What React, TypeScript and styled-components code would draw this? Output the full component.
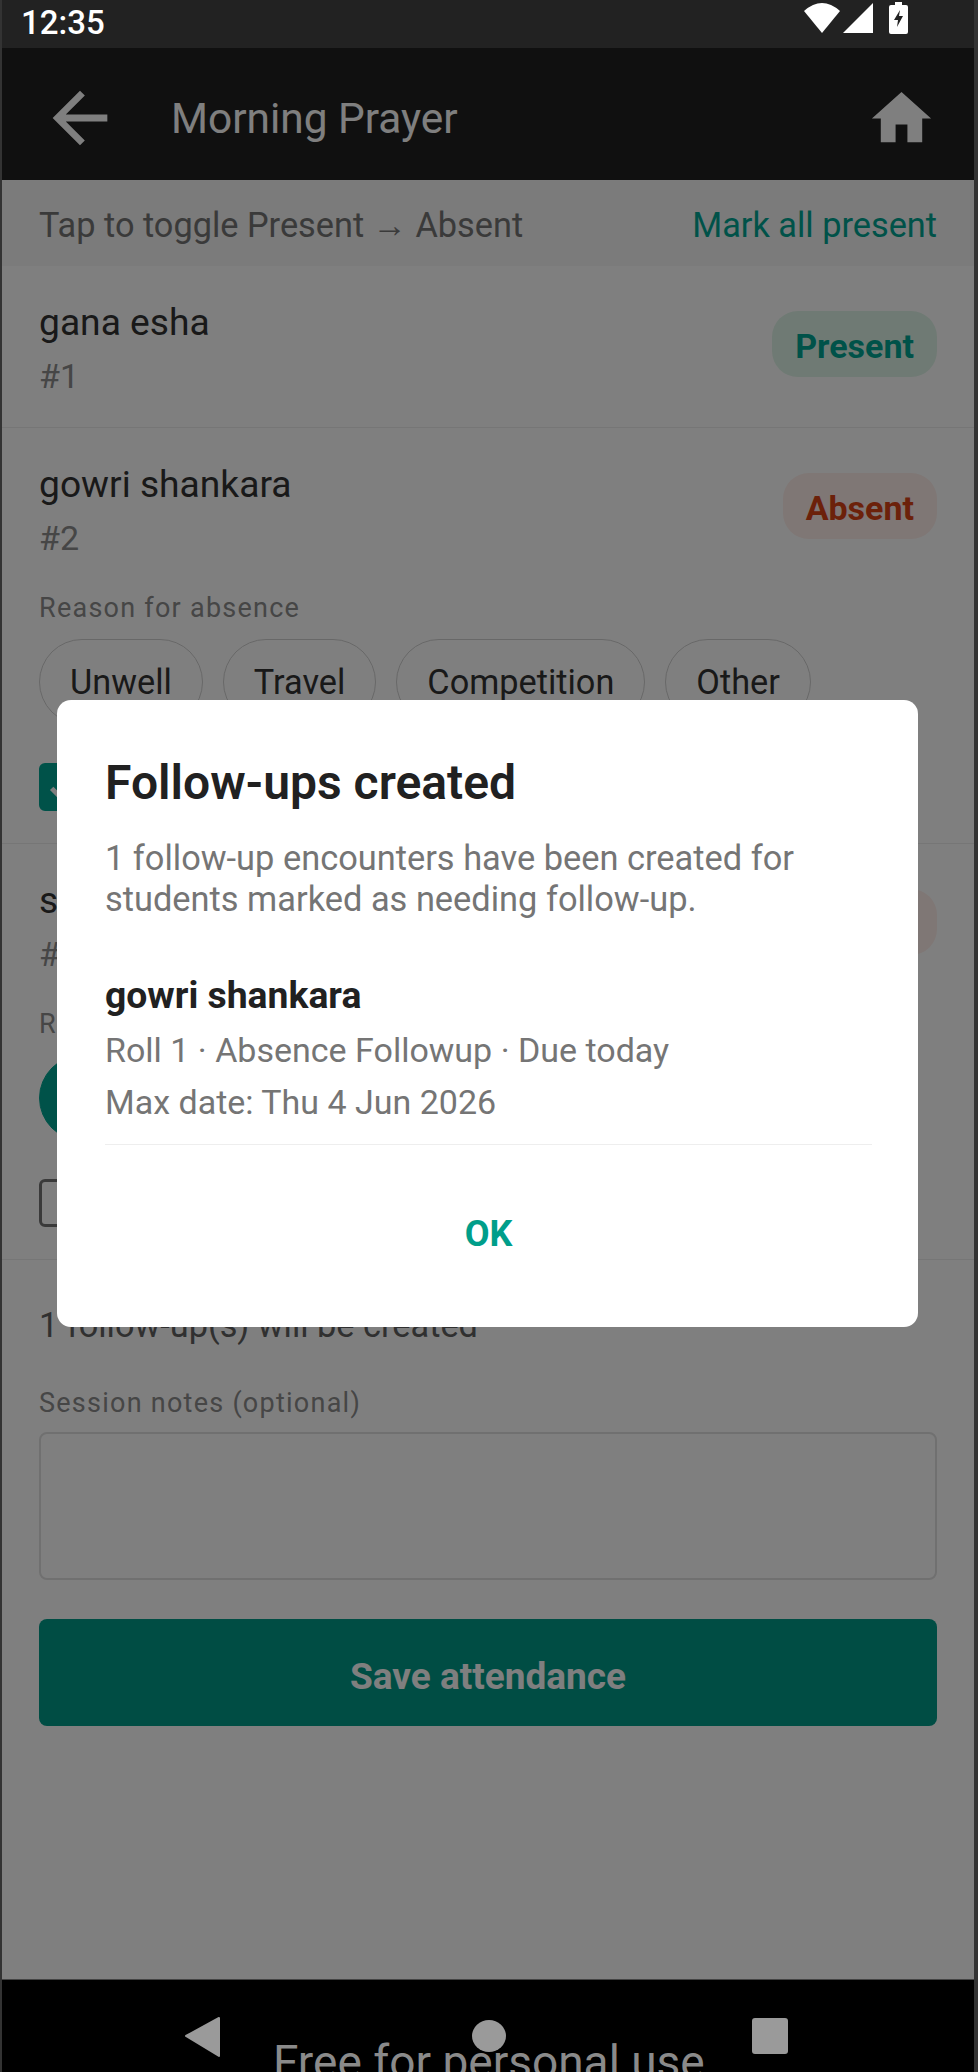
import React from 'react';
import styled, { createGlobalStyle } from 'styled-components';

const GlobalStyle = createGlobalStyle`
  html, body {
    margin: 0;
    padding: 0;
    background: #333;
  }
  * {
    box-sizing: border-box;
  }
`;

const Frame = styled.div`
  width: 978px;
  height: 2072px;
  padding: 0 4px 0 2px;
  display: flex;
  flex-direction: column;
  background: #333;
  font-family: Roboto, 'Liberation Sans', sans-serif;
  overflow: hidden;
`;

const StatusBar = styled.div`
  height: 48px;
  flex: none;
  display: flex;
  align-items: center;
  justify-content: space-between;
  padding: 0 66px 0 19px;
  background: #222;
`;

const Clock = styled.span`
  color: #fff;
  font-size: 33px;
  font-weight: 500;
  line-height: 44px;
  margin-top: -2px;
`;

const StatusIcons = styled.div`
  display: flex;
  align-items: center;
  gap: 3px;
  margin-top: -12px;
`;

const Screen = styled.div`
  position: relative;
  flex: 1;
  display: flex;
  flex-direction: column;
  background: #fff;
`;

const AppBar = styled.header`
  height: 132px;
  flex: none;
  display: flex;
  align-items: center;
  padding: 8px 37px 0;
  background: #202020;
  color: #fff;
`;

const Title = styled.h1`
  flex: 1;
  margin: 2px 0 0 50px;
  font-size: 42.4px;
  font-weight: 400;
  line-height: 52px;
`;

const SubHeader = styled.div`
  height: 86px;
  flex: none;
  display: flex;
  align-items: center;
  justify-content: space-between;
  padding: 3px 37px 0;
  background: #f6f6f6;
  font-size: 34.3px;
  color: #757575;
`;

const MarkAll = styled.span`
  color: #00a592;
`;

const StudentRow = styled.section`
  padding: 34px 37px 28px;
  border-bottom: 1px solid #ededed;
`;

const RowTop = styled.div`
  display: flex;
  justify-content: space-between;
  align-items: flex-start;
  padding-bottom: 1px;
`;

const Name = styled.div`
  font-size: 37.2px;
  line-height: 44px;
  color: #333;
`;

const Roll = styled.div`
  margin-top: 10px;
  font-size: 34px;
  line-height: 44px;
  color: #8c8c8c;
`;

const StatusPill = styled.span<{ $absent?: boolean }>`
  height: 66px;
  margin-top: 11px;
  padding: 4px 23px 0;
  display: flex;
  align-items: center;
  border-radius: 26px;
  font-size: 34px;
  font-weight: 700;
  background: ${({ $absent }) => ($absent ? '#ffeeea' : '#dff5e8')};
  color: ${({ $absent }) => ($absent ? '#d84315' : '#00a592')};
`;

const FieldLabel = styled.div`
  font-size: 27px;
  line-height: 36px;
  letter-spacing: 1.25px;
  color: #8c8c8c;
`;

const AbsenceDetail = styled.div`
  padding-bottom: 4px;
  margin-top: 29px;
`;

const Chips = styled.div`
  display: flex;
  gap: 20px;
  margin-top: 13px;
`;

const Chip = styled.span<{ $active?: boolean }>`
  height: 86px;
  padding: 0 30px;
  display: flex;
  align-items: center;
  border-radius: 43px;
  border: 1.5px solid ${({ $active }) => ($active ? '#00a592' : '#d0d0d0')};
  background: ${({ $active }) => ($active ? '#00a592' : 'transparent')};
  font-size: 34.3px;
  color: ${({ $active }) => ($active ? '#fff' : '#333')};
`;

const FollowUpRow = styled.div`
  display: flex;
  align-items: center;
  gap: 20px;
  margin-top: 38px;
  font-size: 34px;
  color: #333;
`;

const CheckBox = styled.span<{ $checked?: boolean }>`
  width: 48px;
  height: 48px;
  display: flex;
  align-items: center;
  justify-content: center;
  border-radius: 6px;
  border: 3px solid ${({ $checked }) => ($checked ? '#00a592' : '#757575')};
  background: ${({ $checked }) => ($checked ? '#00a592' : 'transparent')};
`;

const Footer = styled.div`
  padding: 43px 37px 0;
`;

const FollowUpCount = styled.div`
  font-size: 34.3px;
  line-height: 44px;
  color: #616161;
`;

const NotesLabel = styled(FieldLabel)`
  margin-top: 38px;
`;

const NotesBox = styled.div`
  height: 148px;
  margin-top: 11px;
  border: 2px solid #e0e0e0;
  border-radius: 8px;
`;

const SaveButton = styled.button`
  width: 100%;
  height: 107px;
  margin-top: 39px;
  padding: 8px 0 0;
  display: block;
  border: 0;
  border-radius: 8px;
  background: #009a88;
  color: #fff;
  font-family: inherit;
  font-size: 37px;
  font-weight: 700;
`;

const Scrim = styled.div`
  position: absolute;
  inset: 0;
  background: rgba(0, 0, 0, 0.5);
`;

const Dialog = styled.div`
  position: absolute;
  left: 55px;
  top: 652px;
  width: 861px;
  height: 627px;
  padding: 55px 46px 0 48px;
  border-radius: 14px;
  background: #fff;
`;

const DialogTitle = styled.h2`
  margin: 0;
  font-size: 48px;
  font-weight: 600;
  line-height: 56px;
  color: #212121;
`;

const DialogText = styled.p`
  margin: 27px 0 0;
  font-size: 34.4px;
  line-height: 41px;
  color: #757575;
`;

const FollowUpName = styled.div`
  margin-top: 53px;
  font-size: 37.3px;
  font-weight: 700;
  line-height: 44px;
  color: #212121;
`;

const FollowUpMeta = styled.div<{ $gap: number }>`
  margin-top: ${({ $gap }) => $gap}px;
  font-size: 34px;
  line-height: 44px;
  color: #757575;
`;

const DialogRule = styled.hr`
  margin: 20px 0 0;
  border: 0;
  border-top: 1.5px solid #eee;
`;

const OkButton = styled.button`
  display: block;
  margin: 67px auto 0;
  padding: 0;
  border: 0;
  background: none;
  font-family: inherit;
  font-size: 36px;
  font-weight: 700;
  line-height: 44px;
  color: #009e8a;
`;

const NavBar = styled.nav`
  position: relative;
  height: 93px;
  flex: none;
  display: flex;
  background: #000;
  border-top: 1px solid #444;
  overflow: hidden;
`;

const NavIcons = styled.svg`
  position: absolute;
  left: 0;
  top: 0;
`;

const Watermark = styled.span`
  position: absolute;
  left: 271px;
  top: 55px;
  font-size: 46px;
  line-height: 54px;
  white-space: nowrap;
  color: #8a8a8a;
`;

const ICON_GREY = '#fff';

function WifiIcon() {
  return (
    <svg width="36" height="30" viewBox="0 0 36 30">
      <path d="M18 30 L0 8 Q18 -8 36 8 Z" fill="#fff" />
    </svg>
  );
}

function SignalIcon() {
  return (
    <svg width="30" height="30" viewBox="0 0 30 30">
      <path d="M30 0 V30 H0 Z" fill="#fff" />
    </svg>
  );
}

function BatteryIcon() {
  return (
    <svg width="19" height="32" viewBox="0 0 19 32" style={{ marginLeft: 13 }}>
      <path d="M6 0 H13 V3 H17 Q19 3 19 5 V30 Q19 32 17 32 H2 Q0 32 0 30 V5 Q0 3 2 3 H6 Z" fill="#fff" />
      <path d="M11 8 L5 18 H9 L8 25 L14 14 H10 Z" fill="#222" />
    </svg>
  );
}

function BackIcon() {
  return (
    <svg width="82" height="82" viewBox="0 0 24 24">
      <path d="M20 11H7.83l5.59-5.59L12 4l-8 8 8 8 1.41-1.41L7.83 13H20v-2z" fill={ICON_GREY} />
    </svg>
  );
}

function HomeIcon() {
  return (
    <svg width="71" height="71" viewBox="0 0 24 24">
      <path d="M10 20v-6h4v6h5v-8h3L12 3 2 12h3v8z" fill={ICON_GREY} />
    </svg>
  );
}

function CheckMark() {
  return (
    <svg width="34" height="34" viewBox="0 0 24 24">
      <path d="M4 13l5 5L20 6" fill="none" stroke="#fff" strokeWidth="3.4" />
    </svg>
  );
}

const REASONS = ['Unwell', 'Travel', 'Competition', 'Other'];

function AbsentDetail({ activeReason, followUp }: { activeReason?: string; followUp?: boolean }) {
  return (
    <AbsenceDetail>
      <FieldLabel>Reason for absence</FieldLabel>
      <Chips>
        {REASONS.map((reason) => (
          <Chip key={reason} $active={reason === activeReason}>
            {reason}
          </Chip>
        ))}
      </Chips>
      <FollowUpRow>
        <CheckBox $checked={followUp}>{followUp && <CheckMark />}</CheckBox>
        Needs follow-up
      </FollowUpRow>
    </AbsenceDetail>
  );
}

export default function App() {
  return (
    <>
      <GlobalStyle />
      <Frame>
        <StatusBar>
          <Clock>12:35</Clock>
          <StatusIcons>
            <WifiIcon />
            <SignalIcon />
            <BatteryIcon />
          </StatusIcons>
        </StatusBar>
        <Screen>
          <AppBar>
            <BackIcon />
            <Title>Morning Prayer</Title>
            <HomeIcon />
          </AppBar>
          <SubHeader>
            <span>Tap to toggle Present → Absent</span>
            <MarkAll>Mark all present</MarkAll>
          </SubHeader>
          <StudentRow>
            <RowTop>
              <div>
                <Name>gana esha</Name>
                <Roll>#1</Roll>
              </div>
              <StatusPill>Present</StatusPill>
            </RowTop>
          </StudentRow>
          <StudentRow>
            <RowTop>
              <div>
                <Name>gowri shankara</Name>
                <Roll>#2</Roll>
              </div>
              <StatusPill $absent>Absent</StatusPill>
            </RowTop>
            <AbsentDetail followUp />
          </StudentRow>
          <StudentRow>
            <RowTop>
              <div>
                <Name>s</Name>
                <Roll>#3</Roll>
              </div>
              <StatusPill $absent>Absent</StatusPill>
            </RowTop>
            <AbsentDetail activeReason="Unwell" />
          </StudentRow>
          <Footer>
            <FollowUpCount>1 follow-up(s) will be created</FollowUpCount>
            <NotesLabel>Session notes (optional)</NotesLabel>
            <NotesBox />
            <SaveButton>Save attendance</SaveButton>
          </Footer>
          <Scrim />
          <Dialog>
            <DialogTitle>Follow-ups created</DialogTitle>
            <DialogText>
              1 follow-up encounters have been created for students marked as needing follow-up.
            </DialogText>
            <FollowUpName>gowri shankara</FollowUpName>
            <FollowUpMeta $gap={11}>Roll 1 · Absence Followup · Due today</FollowUpMeta>
            <FollowUpMeta $gap={8}>Max date: Thu 4 Jun 2026</FollowUpMeta>
            <DialogRule />
            <OkButton>OK</OkButton>
          </Dialog>
        </Screen>
        <NavBar>
          <NavIcons width="972" height="93" viewBox="0 0 972 93">
            <path d="M217 38 V76 L184 56 Z" fill="#9a9a9a" stroke="#9a9a9a" strokeWidth="2" strokeLinejoin="round" />
            <ellipse cx="487" cy="56" rx="17" ry="16" fill="#9a9a9a" />
            <rect x="750" y="38" width="36" height="36" rx="3" fill="#9a9a9a" />
          </NavIcons>
          <Watermark>Free for personal use</Watermark>
        </NavBar>
      </Frame>
    </>
  );
}
